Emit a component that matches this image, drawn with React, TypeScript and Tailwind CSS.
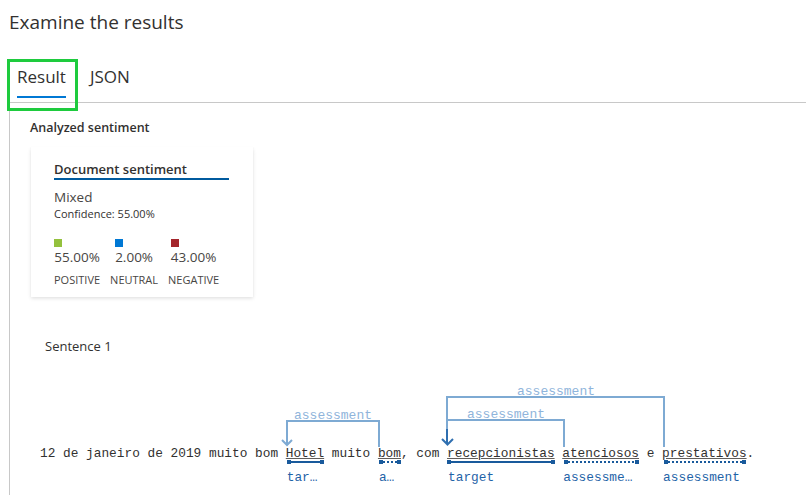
import React from "react";

const MONO = { fontFamily: '"Liberation Mono", "DejaVu Sans Mono", monospace' };

function Word({ text, label, underline }: { text: string; label?: string; underline?: boolean }) {
  return (
    <span className={"relative " + (underline ? "underline decoration-[#605e5c] underline-offset-[1px]" : "")}>
      {text}
      {label && (
        <span className="absolute left-[1px] top-[24px] inline-block whitespace-nowrap text-[12.8px] leading-[16px] text-[#1f63a7] no-underline">
          {label}
        </span>
      )}
    </span>
  );
}

function Solid({ x1, x2 }: { x1: number; x2: number }) {
  return (
    <g fill="#195a9c">
      <rect x={x1} y={462} width={x2 - x1} height={2} />
      <rect x={x1} y={461} width={4} height={4} />
      <rect x={x2 - 4} y={461} width={4} height={4} />
    </g>
  );
}

function Dotted({ x1, x2 }: { x1: number; x2: number }) {
  return (
    <g fill="#195a9c">
      <line x1={x1 + 4} y1={463} x2={x2 - 4} y2={463} stroke="#195a9c" strokeWidth={2} strokeDasharray="2 2" />
      <rect x={x1} y={461} width={4} height={4} />
      <rect x={x2 - 4} y={461} width={4} height={4} />
    </g>
  );
}

export default function App() {
  return (
    <div
      className="relative h-[495px] w-[806px] overflow-hidden bg-white text-[#323130]"
      style={{ fontFamily: '"Segoe UI", "Open Sans", "Noto Sans", sans-serif' }}
    >
      <h1 className="pl-[9px] pt-[9px] text-[19px] font-normal leading-[26px]">Examine the results</h1>

      <div className="ml-[9px] mt-[24px] flex h-[44px] gap-[24px] border-b border-[#c8c8c8] pl-[8px]">
        <div className="flex flex-col pt-[6px]">
          <span className="text-[17px] leading-[24px]">Result</span>
          <span className="mt-[7px] h-[2px] bg-[#0078d4]" />
        </div>
        <div className="flex flex-col pt-[6px]">
          <span className="text-[17px] leading-[24px] text-[#323130]">JSON</span>
        </div>
      </div>

      <div className="ml-[9px] h-[400px] border-l border-[#c8c8c8] pl-[20px] pt-[16px]">
        <div className="text-[12.5px] font-semibold leading-[18px] text-[#323130]">Analyzed sentiment</div>

        <div className="ml-[1px] mt-[10px] h-[150px] w-[222px] bg-white pl-[23px] pt-[13px] shadow-[0_1.6px_3.6px_rgba(0,0,0,0.13),0_0.3px_0.9px_rgba(0,0,0,0.11)]">
          <div className="w-[175px] border-b-2 border-[#005a9e] text-[13px] font-semibold leading-[18px]">
            Document sentiment
          </div>
          <div className="mt-[8px] text-[13.5px] leading-[18px] text-[#484644]">Mixed</div>
          <div className="text-[11px] leading-[16px] text-[#323130]">Confidence: 55.00%</div>
          <div className="mt-[17px] flex gap-[10px]">
            {[
              { c: "bg-[#94c13d]", p: "55.00%", l: "POSITIVE" },
              { c: "bg-[#0078d4]", p: "2.00%", l: "NEUTRAL" },
              { c: "bg-[#a4262c]", p: "43.00%", l: "NEGATIVE" },
            ].map((s) => (
              <div key={s.l} className="flex flex-col items-center">
                <div className="flex flex-col">
                  <span className={"h-[8px] w-[8px] " + s.c} />
                  <span className="mt-[1px] text-[13.5px] leading-[18px] text-[#484644]">{s.p}</span>
                </div>
                <span className="mt-[6px] text-[11px] leading-[16px] text-[#484644]">{s.l}</span>
              </div>
            ))}
          </div>
        </div>

        <div className="ml-[15px] mt-[40px] text-[13px] leading-[18px] text-[#323130]">Sentence 1</div>

        <div className="relative ml-[10px] mt-[29px] h-[110px] pt-[61px]">
          <svg className="absolute left-0 top-0" width={766} height={110} viewBox="40 385 766 110">
            <g fill="none" stroke="#7eaad3" strokeWidth={2}>
              <polyline points="287,446 287,422 379,422 379,448" />
              <polyline points="282,441 287,446 292,441" />
              <polyline points="447,445 447,421 564,421 564,448" />
              <polyline points="447,421 447,398 664,398 664,448" />
            </g>
            <g fill="none" stroke="#2f6fb0" strokeWidth={2}>
              <polyline points="447,430 447,445" />
              <polyline points="442,440 447.5,445.5 453,440" />
            </g>
            <g style={MONO} fontSize={13} fill="#8fb4db" textAnchor="middle">
              <text x={333} y={420}>assessment</text>
              <text x={506} y={419}>assessment</text>
              <text x={556} y={396}>assessment</text>
            </g>
            <Solid x1={287} x2={324} />
            <Dotted x1={379} x2={401} />
            <Solid x1={447} x2={555} />
            <Dotted x1={564} x2={639} />
            <Dotted x1={664} x2={746} />
          </svg>
          <div className="relative whitespace-pre text-[12.8px] leading-[18px] text-[#323130]" style={MONO}>
            {"12 de janeiro de 2019 muito bom "}
            <Word text="Hotel" label="tar…" underline />
            {" muito "}
            <Word text="bom" label="a…" underline />
            {", com "}
            <Word text="recepcionistas" label="target" underline />
            {" "}
            <Word text="atenciosos" label="assessme…" underline />
            {" e "}
            <Word text="prestativos" label="assessment" underline />
            {"."}
          </div>
        </div>
      </div>

      <div className="absolute left-[7px] top-[59px] h-[52px] w-[71px] border-[3px] border-[#1ecb3e]" />
    </div>
  );
}
